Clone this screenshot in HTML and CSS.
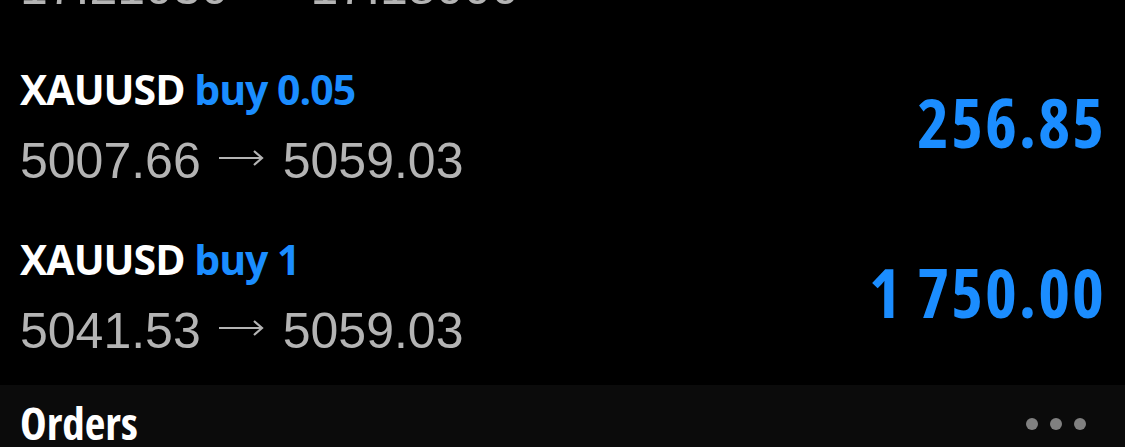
FILE: index.html
```html
<!DOCTYPE html>
<html>
<head>
<meta charset="utf-8">
<link rel="stylesheet" href="styles.css">
</head>
<body>
<div class="screen">
  <div class="positions">
    <div class="row row-cut">
      <div class="info">
        <div class="title"><span class="sym">USDMXN</span> <span class="side">sell 1</span></div>
        <div class="prices"><span>17.21030</span><svg class="arrow" viewBox="0 0 46 18" width="46" height="18"><path d="M1 9H44M36 2L44 9L36 16" fill="none" stroke="#b4b4b4" stroke-width="2.2"/></svg><span>17.18000</span></div>
      </div>
      <div class="value">0.00</div>
    </div>
    <div class="row">
      <div class="info">
        <div class="title"><span class="sym">XAUUSD</span> <span class="side">buy 0.05</span></div>
        <div class="prices"><span>5007.66</span><svg class="arrow" viewBox="0 0 46 18" width="46" height="18"><path d="M1 9H44M36 2L44 9L36 16" fill="none" stroke="#b4b4b4" stroke-width="2.2"/></svg><span>5059.03</span></div>
      </div>
      <div class="value">256.85</div>
    </div>
    <div class="row">
      <div class="info">
        <div class="title"><span class="sym">XAUUSD</span> <span class="side">buy 1</span></div>
        <div class="prices"><span>5041.53</span><svg class="arrow" viewBox="0 0 46 18" width="46" height="18"><path d="M1 9H44M36 2L44 9L36 16" fill="none" stroke="#b4b4b4" stroke-width="2.2"/></svg><span>5059.03</span></div>
      </div>
      <div class="value">1 750.00</div>
    </div>
  </div>
  <div class="section">
    <div class="section-title">Orders</div>
    <div class="more"><span class="dot"></span><span class="dot"></span><span class="dot"></span></div>
  </div>
</div>
</body>
</html>
```
FILE: styles.css
```css
html, body {
  margin: 0;
  padding: 0;
  background: #000;
  height: 447px;
  overflow: hidden;
}
.screen {
  width: 1125px;
  height: 447px;
  overflow: hidden;
  display: flex;
  flex-direction: column;
}
.positions {
  margin-top: -135px;
  display: flex;
  flex-direction: column;
}
.row {
  height: 170px;
  box-sizing: border-box;
  display: flex;
  align-items: flex-start;
  justify-content: space-between;
  padding: 0 21px 0 20px;
}
.info {
  display: flex;
  flex-direction: column;
  padding-top: 30px;
}
.title {
  font-family: "Open Sans", sans-serif;
  font-stretch: 100%;
  font-weight: 700;
  font-size: 41px;
  letter-spacing: -1px;
  line-height: 48px;
  white-space: nowrap;
}
.sym { color: #fff; }
.side { color: #1b8dff; }
.prices {
  margin-top: 20px;
  display: flex;
  align-items: center;
  font-family: "Liberation Sans", Arial, sans-serif;
  font-size: 50px;
  line-height: 56px;
  color: #b4b4b4;
  white-space: nowrap;
}
.row-cut .prices {
  margin-top: 16px;
}
.arrow {
  margin: -6px 19px 0 17px;
  flex: none;
}
.value {
  padding-top: 48px;
  margin-right: -2px;
  font-family: "Open Sans", sans-serif;
  font-stretch: 75%;
  font-weight: 700;
  font-size: 68px;
  letter-spacing: 2px;
  line-height: 78px;
  color: #1b8dff;
  white-space: nowrap;
}
.section {
  margin-top: 10px;
  flex: 1;
  background: #0b0b0b;
  display: flex;
  align-items: flex-start;
  justify-content: space-between;
  padding: 12px 39px 0 20px;
}
.section-title {
  font-family: "Open Sans", sans-serif;
  font-stretch: 75%;
  font-weight: 700;
  font-size: 45px;
  line-height: 52px;
  color: #fff;
}
.more {
  display: flex;
  gap: 12px;
  padding-top: 21px;
}
.dot {
  width: 12px;
  height: 12px;
  border-radius: 50%;
  background: #808080;
}
```
